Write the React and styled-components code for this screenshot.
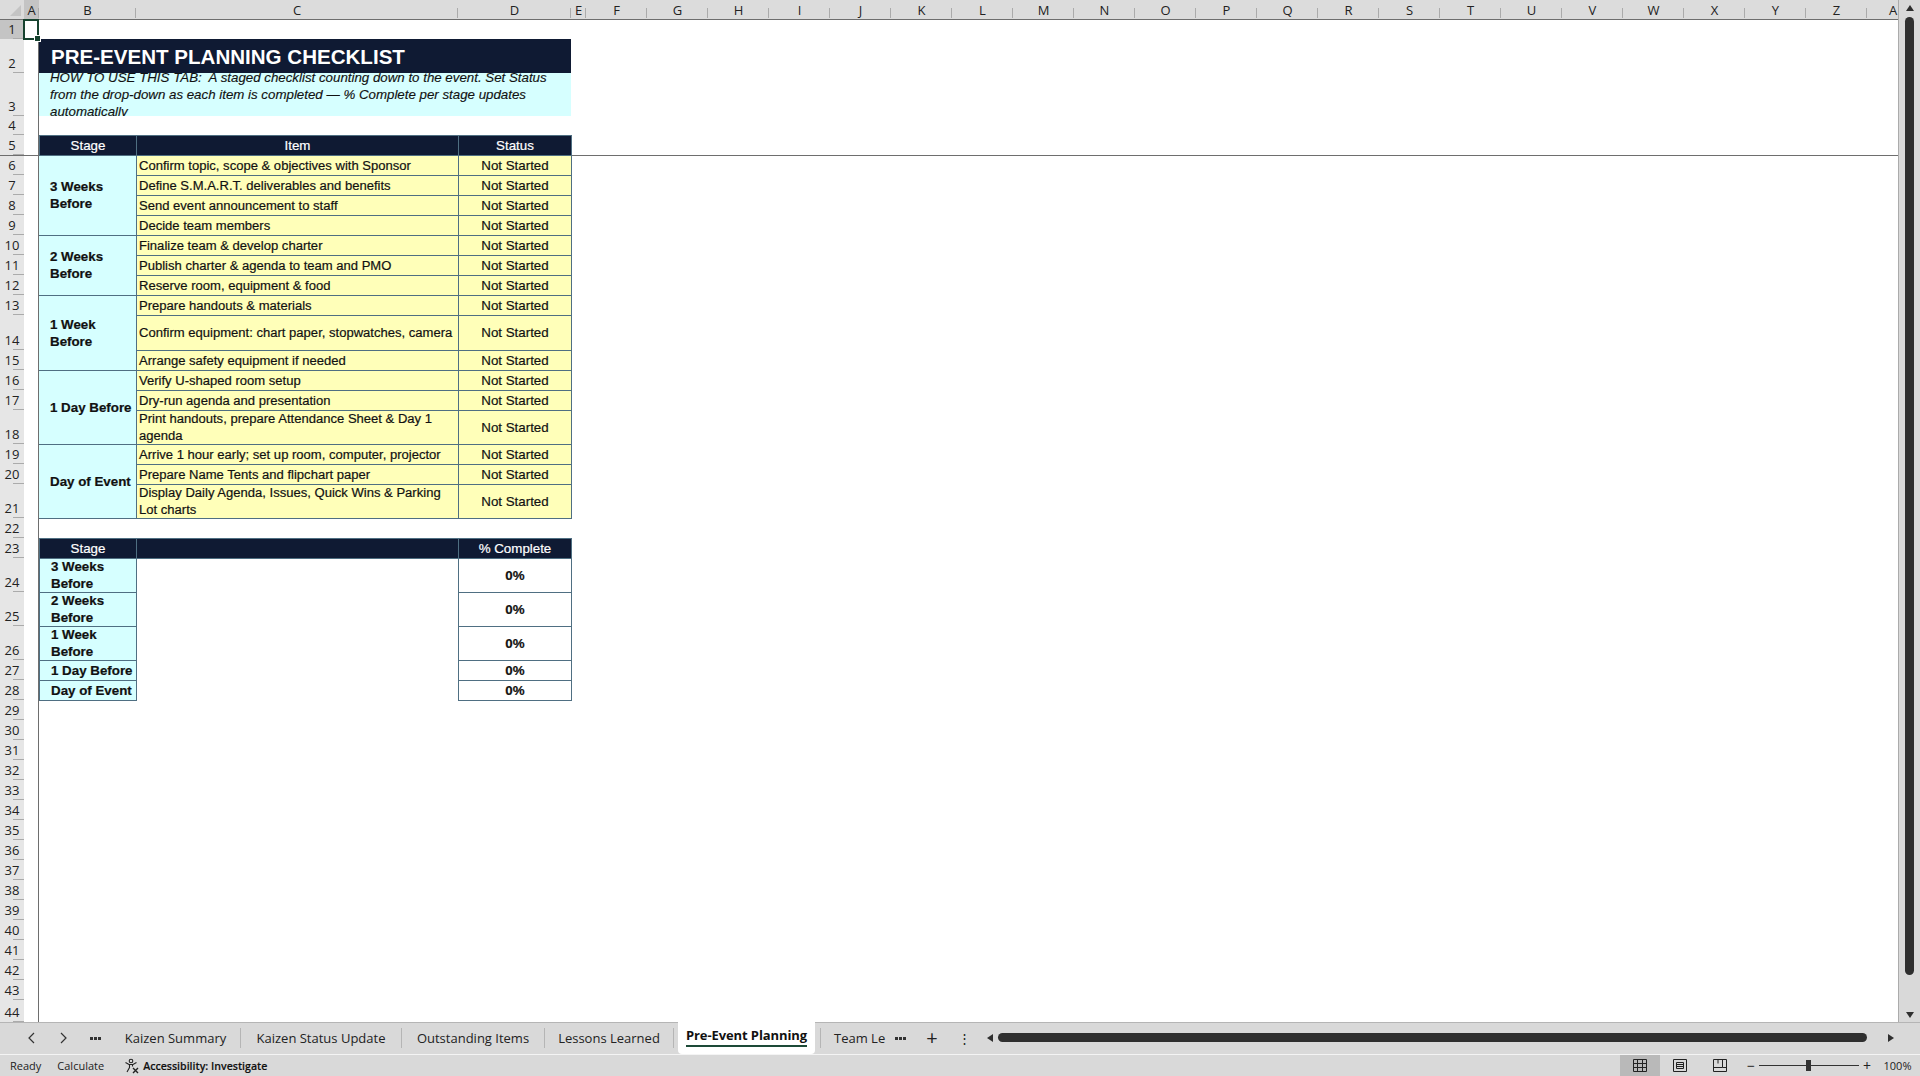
import React from "react";
import styled, { createGlobalStyle } from "styled-components";

const UI_FONT = `"Open Sans", "Noto Sans", sans-serif`;
const CELL_FONT = `"Liberation Sans", Arial, sans-serif`;

const NAVY = "#0f1a33";
const CYAN = "#d6ffff";
const YELLOW = "#ffffb9";
const EDGE = "#4f6f82";

const GlobalStyle = createGlobalStyle`
  html, body {
    margin: 0;
    padding: 0;
    height: 100%;
    overflow: hidden;
    background: #d9d9d9;
  }
`;

// column widths in px, first entry is the row header
const letters = "FGHIJKLMNOPQRSTUVWXYZ".split("");
const columns = ["A", "B", "C", "D", "E", ...letters, "A"];
const columnTemplate = "24px 15px 97px 322px 113px 15px repeat(21, 61px) 52px";

// row heights in px, index 0 is row 1
const rowHeights = [
  19, 34, 43, 19, 20, 20, 20, 20, 20, 20, 20, 20, 20, 35, 20, 20, 20, 34, 20,
  20, 34, 20, 20, 34, 34, 34, 20, 20, 20, 20, 20, 20, 20, 20, 20, 20, 20, 20,
  20, 20, 20, 20, 20, 22,
];
const rowTemplate = `20px ${rowHeights.map((h) => h + "px").join(" ")}`;

const groups = [
  { label: "3 Weeks Before", start: 6, span: 4 },
  { label: "2 Weeks Before", start: 10, span: 3 },
  { label: "1 Week Before", start: 13, span: 3 },
  { label: "1 Day Before", start: 16, span: 3 },
  { label: "Day of Event", start: 19, span: 3 },
];

const items = [
  "Confirm topic, scope & objectives with Sponsor",
  "Define S.M.A.R.T. deliverables and benefits",
  "Send event announcement to staff",
  "Decide team members",
  "Finalize team & develop charter",
  "Publish charter & agenda to team and PMO",
  "Reserve room, equipment & food",
  "Prepare handouts & materials",
  "Confirm equipment: chart paper, stopwatches, camera",
  "Arrange safety equipment if needed",
  "Verify U-shaped room setup",
  "Dry-run agenda and presentation",
  "Print handouts, prepare Attendance Sheet & Day 1 agenda",
  "Arrive 1 hour early; set up room, computer, projector",
  "Prepare Name Tents and flipchart paper",
  "Display Daily Agenda, Issues, Quick Wins & Parking Lot charts",
];

const Page = styled.div`
  display: flex;
  flex-direction: column;
  width: 1920px;
  height: 1076px;
  overflow: hidden;
  background: #d9d9d9;
`;

const SheetRow = styled.div`
  display: flex;
  height: 1022px;
  flex: none;
`;

const Sheet = styled.div`
  display: grid;
  width: 1898px;
  flex: none;
  overflow: hidden;
  background: #fff;
  grid-template-columns: ${columnTemplate};
  grid-template-rows: ${rowTemplate};
  border-right: 1px solid #ababab;
  box-sizing: content-box;
`;

const Corner = styled.div`
  grid-row: 1;
  grid-column: 1;
  background: #dcdcdc;
  border-bottom: 1px solid #6e6e6e;
  position: relative;
  &::after {
    content: "";
    position: absolute;
    right: 3px;
    bottom: 3px;
    border-style: solid;
    border-width: 0 0 11px 11px;
    border-color: transparent transparent #c4c4c4 transparent;
  }
`;

const ColHead = styled.div`
  grid-row: 1;
  grid-column: ${(p) => p.$col};
  display: flex;
  align-items: center;
  justify-content: center;
  position: relative;
  box-sizing: border-box;
  padding-top: 1px;
  background: ${(p) => (p.$active ? "#c4c4c4" : "#dcdcdc")};
  border-bottom: 1px solid #6e6e6e;
  font: 13px ${UI_FONT};
  color: #222;
  &::after {
    content: "";
    position: absolute;
    right: 0;
    bottom: 1px;
    height: 10px;
    width: 1px;
    background: #ababab;
  }
`;

const RowHead = styled.div`
  grid-column: 1;
  grid-row: ${(p) => p.$row};
  display: flex;
  align-items: flex-end;
  justify-content: center;
  position: relative;
  box-sizing: border-box;
  padding-bottom: 1px;
  background: ${(p) => (p.$active ? "#c4c4c4" : "#e6e6e6")};
  font: 13px/17px ${UI_FONT};
  color: #222;
  &::after {
    content: "";
    position: absolute;
    right: 0;
    bottom: 0;
    width: 11px;
    height: 1px;
    background: #ababab;
  }
`;

const FreezeRow = styled.div`
  grid-row: 6;
  grid-column: 1 / -1;
  margin-bottom: -1px;
  border-bottom: 1px solid #6e6e6e;
  z-index: 2;
  pointer-events: none;
`;

const FreezeCol = styled.div`
  grid-row: 2 / -1;
  grid-column: 2;
  border-right: 1px solid #6e6e6e;
  z-index: 2;
  pointer-events: none;
`;

const SelectedCell = styled.div`
  grid-row: 2;
  grid-column: 2;
  margin: -1px 0 -1px -1px;
  border: 2px solid #17432f;
  z-index: 4;
  position: relative;
  &::after {
    content: "";
    position: absolute;
    right: -4px;
    bottom: -4px;
    width: 5px;
    height: 5px;
    background: #17432f;
    border: 1px solid #fff;
  }
`;

const Title = styled.div`
  grid-row: 3;
  grid-column: 3 / 6;
  display: flex;
  align-items: center;
  padding: 1px 0 0 12px;
  background: ${NAVY};
  color: #fff;
  font: bold 20.55px ${CELL_FONT};
  z-index: 3;
`;

const Note = styled.div`
  grid-row: 4;
  grid-column: 3 / 6;
  display: flex;
  align-items: center;
  overflow: hidden;
  padding: 0 4px 0 11px;
  background: ${CYAN};
  font: italic 13.3px/17px ${CELL_FONT};
  -webkit-text-stroke: 0.15px #111;
  color: #111;
  z-index: 3;
`;

const Cell = styled.div`
  grid-row: ${(p) => p.$row} / span ${(p) => p.$span || 1};
  grid-column: ${(p) => p.$col};
  display: flex;
  align-items: center;
  box-sizing: border-box;
  margin: 0 -1px -1px 0;
  padding-bottom: 1px;
  font: 13.33px/17px ${CELL_FONT};
  -webkit-text-stroke: 0.2px currentColor;
  color: #111;
  z-index: 3;
`;

const HeadCell = styled(Cell)`
  justify-content: center;
  background: ${NAVY};
  color: #fff;
  border: 1px solid ${EDGE};
`;

const StageCell = styled(Cell)`
  padding-left: 11px;
  padding-right: 2px;
  background: ${CYAN};
  font-weight: bold;
  border-top: 1px solid ${EDGE};
  border-bottom: 1px solid ${EDGE};
  border-right: 1px solid ${EDGE};
  ${(p) => p.$boxed && `border-left: 1px solid ${EDGE};`}
`;

const ItemCell = styled(Cell)`
  padding-left: 2px;
  padding-right: 1px;
  background: ${YELLOW};
  font-size: 13.05px;
  border: 1px solid ${EDGE};
`;

const StatusCell = styled(Cell)`
  justify-content: center;
  background: ${YELLOW};
  border: 1px solid ${EDGE};
`;

const PercentCell = styled(Cell)`
  justify-content: center;
  background: #fff;
  font-weight: bold;
  border: 1px solid ${EDGE};
`;

const Scrollbar = styled.div`
  flex: 1;
  display: flex;
  flex-direction: column;
  align-items: center;
  padding-top: 5px;
`;

const ArrowUp = styled.div`
  width: 0;
  height: 0;
  border-left: 4.5px solid transparent;
  border-right: 4.5px solid transparent;
  border-bottom: 6px solid #2f2f2f;
`;

const ArrowDown = styled.div`
  width: 0;
  height: 0;
  border-left: 4.5px solid transparent;
  border-right: 4.5px solid transparent;
  border-top: 6px solid #2f2f2f;
  margin-bottom: 4px;
`;

const VThumb = styled.div`
  width: 9px;
  height: 958px;
  margin-top: 6px;
  margin-bottom: auto;
  border-radius: 5px;
  background: #2f2f2f;
`;

const TabBar = styled.div`
  display: flex;
  align-items: center;
  height: 32px;
  flex: none;
  box-sizing: border-box;
  padding-bottom: 2px;
  border-top: 1px solid #b5b5b5;
  font: 13px ${UI_FONT};
  color: #222;
`;

const NavButton = styled.div`
  width: 32px;
  flex: none;
  display: flex;
  justify-content: center;
  align-items: center;
  margin-left: ${(p) => p.$offset || 0}px;
  font-size: ${(p) => p.$size || 13}px;
`;

const Tab = styled.div`
  flex: none;
  box-sizing: border-box;
  width: ${(p) => p.$w}px;
  height: 20px;
  display: flex;
  align-items: center;
  justify-content: center;
  white-space: nowrap;
  border-right: 1px solid #b5b5b5;
`;

const ActiveTab = styled.div`
  flex: none;
  box-sizing: border-box;
  width: 137px;
  height: 33px;
  margin: -1px 5px -1px 4px;
  padding-bottom: 3px;
  display: flex;
  align-items: center;
  justify-content: center;
  background: #fff;
  border-radius: 0 0 4px 4px;
  font-weight: 700;
  letter-spacing: -0.1px;
  color: #111;
  & > span {
    border-bottom: 2px solid #1d4a38;
    line-height: 19px;
  }
`;

const ClippedTab = styled.div`
  flex: none;
  box-sizing: border-box;
  width: 66px;
  height: 20px;
  line-height: 20px;
  padding-left: 13px;
  border-left: 1px solid #b5b5b5;
  white-space: nowrap;
`;

const HScroll = styled.div`
  flex: none;
  display: flex;
  align-items: center;
  margin-left: 7px;
  width: 911px;
  gap: 5px;
`;

const ArrowLeft = styled.div`
  width: 0;
  height: 0;
  border-top: 4.5px solid transparent;
  border-bottom: 4.5px solid transparent;
  border-right: 6px solid #2f2f2f;
`;

const ArrowRight = styled.div`
  width: 0;
  height: 0;
  border-top: 4.5px solid transparent;
  border-bottom: 4.5px solid transparent;
  border-left: 6px solid #2f2f2f;
  margin-left: 16px;
`;

const HThumb = styled.div`
  width: 869px;
  height: 9px;
  border-radius: 5px;
  background: #2f2f2f;
`;

const StatusBar = styled.div`
  display: flex;
  align-items: center;
  height: 22px;
  flex: none;
  box-sizing: border-box;
  border-top: 1px solid #f4f4f4;
  padding-left: 10px;
  font: 11px ${UI_FONT};
  color: #222;
`;

const StatusText = styled.span`
  margin-right: ${(p) => p.$gap}px;
`;

const Accessibility = styled.span`
  font-size: 10.6px;
  font-weight: 600;
  -webkit-text-stroke: 0.15px currentColor;
  color: #111;
  margin-left: 3px;
`;

const ViewButton = styled.div`
  width: 40px;
  height: 21px;
  flex: none;
  display: flex;
  align-items: center;
  justify-content: center;
  background: ${(p) => (p.$active ? "#b9b9b9" : "transparent")};
`;

const ViewButtons = styled.div`
  display: flex;
  margin-left: auto;
`;

const ZoomControl = styled.div`
  display: flex;
  align-items: center;
  box-sizing: border-box;
  padding-left: 7px;
  width: 180px;
  flex: none;
  gap: 4px;
  font-size: 14px;
`;

const Slider = styled.div`
  width: 100px;
  height: 1px;
  background: #333;
  position: relative;
  &::after {
    content: "";
    position: absolute;
    left: 47px;
    top: -5px;
    width: 5px;
    height: 11px;
    background: #333;
  }
`;

const ZoomText = styled.span`
  width: 45px;
  flex: none;
  font-size: 11px;
  text-align: center;
`;

const Chevron = ({ flip }) => (
  <svg width="9" height="12" viewBox="0 0 9 12" fill="none" stroke="#333" strokeWidth="1.2">
    <path d={flip ? "M2 1l5 5-5 5" : "M7 1L2 6l5 5"} />
  </svg>
);

const Dots = () => (
  <svg width="11" height="4" viewBox="0 0 11 4" fill="#333">
    <rect x="0" y="1" width="3" height="3" />
    <rect x="4" y="1" width="3" height="3" />
    <rect x="8" y="1" width="3" height="3" />
  </svg>
);

const AccessIcon = () => (
  <svg width="16" height="16" viewBox="0 0 16 16" fill="none" stroke="#222" strokeWidth="1.1">
    <circle cx="7" cy="3" r="1.8" />
    <path d="M1.5 4.5L5 6.5h4l3.5-2M5.5 6.5v3L3 14M8.5 6.5v2" />
    <path d="M9 10l5 5M14 10l-5 5" strokeWidth="1.4" />
  </svg>
);

const NormalIcon = () => (
  <svg width="14" height="13" viewBox="0 0 14 13" fill="none" stroke="#222">
    <path d="M.5.5h13v12H.5zM.5 4.5h13M.5 8.5h13M4.5.5v12M9.5.5v12" />
  </svg>
);

const LayoutIcon = () => (
  <svg width="14" height="13" viewBox="0 0 14 13" fill="none" stroke="#222">
    <path d="M.5.5h13v12H.5zM3.5 3.5h7v6h-7zM3.5 5.5h7M3.5 7.5h7" />
  </svg>
);

const BreakIcon = () => (
  <svg width="14" height="13" viewBox="0 0 14 13" fill="none" stroke="#222">
    <path d="M.5.5h13v12H.5zM.5 8.5h9v-8M5 .5v4M9.5 8.5h4" />
  </svg>
);

const App = () => {
  // rows of the checklist start at sheet row 6, grid row = sheet row + 1
  let itemRow = 7;
  const summary = [
    { label: "3 Weeks Before", row: 25 },
    { label: "2 Weeks Before", row: 26 },
    { label: "1 Week Before", row: 27 },
    { label: "1 Day Before", row: 28 },
    { label: "Day of Event", row: 29 },
  ];

  return (
    <Page>
      <GlobalStyle />
      <SheetRow>
        <Sheet>
          <Corner />
          {columns.map((c, i) => (
            <ColHead key={i} $col={i + 2} $active={i === 0}>
              {c}
            </ColHead>
          ))}
          {rowHeights.map((_, i) => (
            <RowHead key={i} $row={i + 2} $active={i === 0}>
              {i + 1}
            </RowHead>
          ))}
          <FreezeRow />
          <FreezeCol />
          <SelectedCell />

          <Title>PRE-EVENT PLANNING CHECKLIST</Title>
          <Note>
            <div>
              HOW TO USE THIS TAB:&nbsp; A staged checklist counting down to the
              event. Set Status from the drop-down as each item is completed —
              % Complete per stage updates automatically
            </div>
          </Note>

          <HeadCell $row={6} $col={3}>Stage</HeadCell>
          <HeadCell $row={6} $col={4}>Item</HeadCell>
          <HeadCell $row={6} $col={5}>Status</HeadCell>

          {groups.map((g) => (
            <StageCell key={g.start} $row={g.start + 1} $span={g.span} $col={3}>
              {g.label}
            </StageCell>
          ))}
          {items.map((text) => {
            const row = itemRow++;
            return (
              <React.Fragment key={text}>
                <ItemCell $row={row} $col={4}>{text}</ItemCell>
                <StatusCell $row={row} $col={5}>Not Started</StatusCell>
              </React.Fragment>
            );
          })}

          <HeadCell $row={24} $col={3}>Stage</HeadCell>
          <HeadCell $row={24} $col={4} />
          <HeadCell $row={24} $col={5}>% Complete</HeadCell>
          {summary.map((s) => (
            <React.Fragment key={s.row}>
              <StageCell $row={s.row} $col={3} $boxed>{s.label}</StageCell>
              <PercentCell $row={s.row} $col={5}>0%</PercentCell>
            </React.Fragment>
          ))}
        </Sheet>
        <Scrollbar>
          <ArrowUp />
          <VThumb />
          <ArrowDown />
        </Scrollbar>
      </SheetRow>

      <TabBar>
        <NavButton $offset={15}><Chevron /></NavButton>
        <NavButton><Chevron flip /></NavButton>
        <NavButton><Dots /></NavButton>
        <Tab $w={130}>Kaizen Summary</Tab>
        <Tab $w={161}>Kaizen Status Update</Tab>
        <Tab $w={143}>Outstanding Items</Tab>
        <Tab $w={129}>Lessons Learned</Tab>
        <ActiveTab><span>Pre-Event Planning</span></ActiveTab>
        <ClippedTab>Team Le</ClippedTab>
        <NavButton $offset={-2}><Dots /></NavButton>
        <NavButton $size={20}>+</NavButton>
        <NavButton>⋮</NavButton>
        <HScroll>
          <ArrowLeft />
          <HThumb />
          <ArrowRight />
        </HScroll>
      </TabBar>

      <StatusBar>
        <StatusText $gap={16}>Ready</StatusText>
        <StatusText $gap={20}>Calculate</StatusText>
        <AccessIcon />
        <Accessibility>Accessibility: Investigate</Accessibility>
        <ViewButtons>
          <ViewButton $active><NormalIcon /></ViewButton>
          <ViewButton><LayoutIcon /></ViewButton>
          <ViewButton><BreakIcon /></ViewButton>
        </ViewButtons>
        <ZoomControl>
          −<Slider />+
          <ZoomText>100%</ZoomText>
        </ZoomControl>
      </StatusBar>
    </Page>
  );
};

export default App;
